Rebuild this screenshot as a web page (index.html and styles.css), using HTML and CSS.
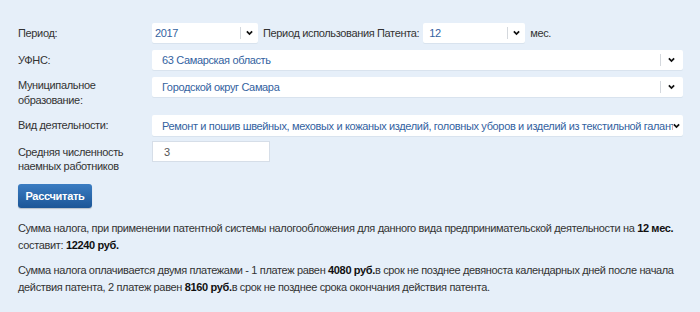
FILE: index.html
```html
<!DOCTYPE html>
<html lang="ru">
<head>
  <meta charset="UTF-8" />
  <title>Калькулятор патента</title>
  <link rel="stylesheet" href="styles.css">
</head>
<body>

  <!-- FORM -->
  <form class="calc">
    <div class="row">
      <label class="label">Период:</label>
      <div class="inline">
        <div class="select select-year">
          <span class="value">2017</span>
          <span class="sep"></span>
          <svg class="arrow" viewBox="0 0 8 6"><path d="M1 1.2 L4 4.2 L7 1.2" /></svg>
        </div>
        <span class="inline-text">Период использования Патента:</span>
        <div class="select select-months">
          <span class="value">12</span>
          <span class="sep"></span>
          <svg class="arrow" viewBox="0 0 8 6"><path d="M1 1.2 L4 4.2 L7 1.2" /></svg>
        </div>
        <span class="inline-text">мес.</span>
      </div>
    </div>

    <div class="row">
      <label class="label">УФНС:</label>
      <div class="select select-wide">
        <span class="value">63 Самарская область</span>
        <span class="sep"></span>
        <svg class="arrow" viewBox="0 0 8 6"><path d="M1 1.2 L4 4.2 L7 1.2" /></svg>
      </div>
    </div>

    <div class="row">
      <label class="label label-two">Муниципальное<br>образование:</label>
      <div class="select select-wide">
        <span class="value">Городской округ Самара</span>
        <span class="sep"></span>
        <svg class="arrow" viewBox="0 0 8 6"><path d="M1 1.2 L4 4.2 L7 1.2" /></svg>
      </div>
    </div>

    <div class="row row-kind">
      <label class="label">Вид деятельности:</label>
      <div class="select select-wide select-kind">
        <span class="value">Ремонт и пошив швейных, меховых и кожаных изделий, головных уборов и изделий из текстильной галантереи</span>
        <svg class="arrow" viewBox="0 0 8 6"><path d="M1 1.2 L4 4.2 L7 1.2" /></svg>
      </div>
    </div>

    <div class="row row-staff">
      <label class="label label-staff">Средняя численность<br>наемных работников</label>
      <div class="input">3</div>
    </div>

    <button type="button" class="btn">Рассчитать</button>
  </form>

  <!-- RESULT -->
  <div class="result">
    <p>Сумма налога, при применении патентной системы налогообложения для данного вида предпринимательской деятельности на <b>12 мес.</b> составит: <b>12240 руб.</b></p>
    <p>Сумма налога оплачивается двумя платежами - 1 платеж равен <b>4080 руб.</b>в срок не позднее девяноста календарных дней после начала действия патента, 2 платеж равен <b>8160 руб.</b>в срок не позднее срока окончания действия патента.</p>
  </div>

</body>
</html>
```

FILE: styles.css
```css
/* GLOBAL */
* { box-sizing: border-box; margin: 0; padding: 0; }
body {
  font-family: "Liberation Sans", Arial, sans-serif;
  font-size: 11px;
  letter-spacing: -0.35px;
  color: #333;
  background: #e6eff9;
  padding: 23px 16px 0 18px;
}

/* FORM ROWS */
.row {
  display: grid;
  grid-template-columns: 134px 1fr;
  align-items: start;
  margin-bottom: 7px;
}
.label {
  line-height: 15px;
  padding-top: 3px;
}
.label-two { padding-top: 1px; }
.label-staff { padding-top: 4px; line-height: 14px; }
.row-kind { margin-top: 3px; margin-bottom: 5px; }
.row-staff { margin-bottom: 0; }

.inline {
  display: flex;
  align-items: center;
}
.inline-text { padding: 0 4px 0 5px; }

/* SELECTS */
.select {
  display: flex;
  align-items: center;
  height: 20px;
  background: #fff;
  border-radius: 2px;
  box-shadow: 0 1px 0 #d9e3ee;
  color: #33629f;
  padding-left: 10px;
  padding-right: 5px;
  overflow: hidden;
}
.select .value {
  flex: 1;
  white-space: nowrap;
  overflow: hidden;
}
.select .sep {
  width: 1px;
  height: 12px;
  background: #d4d8dd;
  margin-right: 5px;
}
.arrow {
  width: 7px;
  height: 6px;
  fill: none;
  stroke: #111;
  stroke-width: 2;
}
.select-year { width: 106px; padding-left: 3px; }
.select-months { width: 102px; padding-left: 6px; }
.select-wide { width: 531px; padding-right: 8px; }
.select-wide .sep { margin-right: 7px; }
.select-kind { height: 21px; padding-right: 3px; }

/* INPUT */
.input {
  width: 118px;
  height: 21px;
  line-height: 21px;
  background: #fff;
  border: 1px solid #d6dee8;
  padding-left: 11px;
  color: #555;
}

/* BUTTON */
.btn {
  display: block;
  margin-top: 11px;
  width: 74px;
  height: 24px;
  border: 0;
  border-radius: 3px;
  background: linear-gradient(#3a7cc2, #1c5697);
  color: #fff;
  font-family: "Liberation Sans", Arial, sans-serif;
  font-size: 11px;
  font-weight: bold;
  letter-spacing: -0.3px;
  box-shadow: 0 1px 1px rgba(0,0,0,0.2);
}

/* RESULT TEXT */
.result { margin-top: 12px; }
.result p {
  line-height: 17px;
  margin-bottom: 8px;
  padding-right: 10px;
}
.result b { color: #111; }
```
